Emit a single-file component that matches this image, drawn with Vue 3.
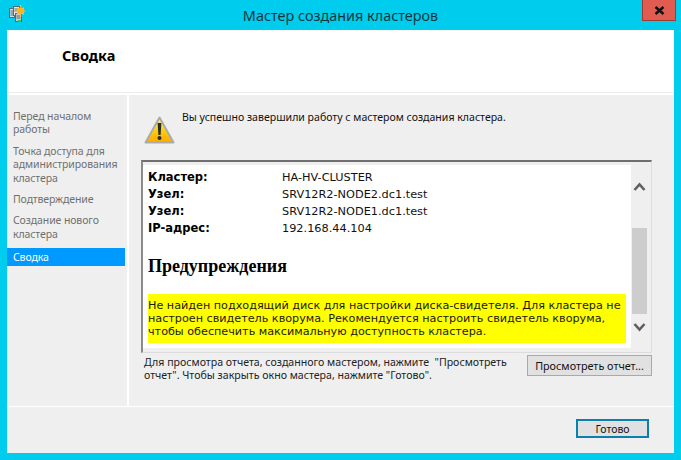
<script setup>
const steps = [
  { label: 'Перед началом работы' },
  { label: 'Точка доступа для администрирования кластера' },
  { label: 'Подтверждение' },
  { label: 'Создание нового кластера' },
  { label: 'Сводка', active: true }
]
const facts = [
  ['Кластер:', 'HA-HV-CLUSTER'],
  ['Узел:', 'SRV12R2-NODE2.dc1.test'],
  ['Узел:', 'SRV12R2-NODE1.dc1.test'],
  ['IP-адрес:', '192.168.44.104']
]
</script>

<template>
  <div class="window">
    <div class="titlebar">
      <svg class="app-icon" width="18" height="18" viewBox="0 0 18 18">
        <g stroke="#5a6a70" stroke-width="1">
          <rect x="1.5" y="3.5" width="5" height="9" fill="#d8dfe2" />
          <rect x="5.5" y="1.5" width="6" height="9" fill="#e6eaec" />
          <rect x="7.5" y="8.5" width="6" height="8" fill="#c8d0d4" />
        </g>
        <path d="M2.5 6h3M2.5 8h3M2.5 10h3M6.5 4h4M6.5 6h4M8.5 11h4M8.5 13h4" stroke="#56666c" stroke-width="1" />
        <rect x="10" y="15" width="3" height="2" fill="#35c24a" />
        <circle cx="12.6" cy="6" r="3.6" fill="#ffb21c" />
        <path d="M12.6 0v2M12.6 10v2M7.6 6h2M15.6 6h2M9.2 2.6l1.4 1.4M14.6 8l1.4 1.4M16 2.6l-1.4 1.4M10.6 8 9.2 9.4" stroke="#ffc53d" stroke-width="1.2" />
      </svg>
      <span class="title">Мастер создания кластеров</span>
      <button class="close" type="button">
        <svg width="11" height="9" viewBox="0 0 11 9"><path d="M1.5 1l8 7M9.5 1l-8 7" stroke="#111" stroke-width="2.4" /></svg>
      </button>
    </div>

    <div class="client">
      <header class="head"><h1>Сводка</h1></header>

      <div class="middle">
        <nav class="steps">
          <div v-for="s in steps" :key="s.label" class="step" :class="{ active: s.active }">{{ s.label }}</div>
        </nav>

        <main class="main">
          <div class="intro">
            <svg class="warn" width="31" height="28" viewBox="0 0 31 28">
              <defs>
                <linearGradient id="warnfill" x1="0" y1="0" x2="0" y2="1">
                  <stop offset="0" stop-color="#fff0a8" />
                  <stop offset="0.5" stop-color="#ffcf10" />
                  <stop offset="1" stop-color="#ffa800" />
                </linearGradient>
              </defs>
              <path d="M15.5 1.5 29.5 26.5H1.5Z" fill="url(#warnfill)" stroke="#ababab" stroke-width="2" stroke-linejoin="round" />
              <path d="M13.6 7h3.8l-.8 12h-2.2Z" fill="#2b2b2b" />
              <circle cx="15.5" cy="22" r="2" fill="#2b2b2b" />
            </svg>
            <p>Вы успешно завершили работу с мастером создания кластера.</p>
          </div>

          <section class="report">
            <div class="doc">
              <div v-for="(f, i) in facts" :key="i" class="fact">
                <b>{{ f[0] }}</b><span>{{ f[1] }}</span>
              </div>
              <h2>Предупреждения</h2>
              <p class="alert">Не найден подходящий диск для настройки диска-свидетеля. Для кластера не настроен свидетель кворума. Рекомендуется настроить свидетель кворума, чтобы обеспечить максимальную доступность кластера.</p>
            </div>
            <div class="scroll">
              <svg width="13" height="10" viewBox="0 0 13 10"><path d="M1.5 8 6.5 2.5 11.5 8" fill="none" stroke="#5f5f5f" stroke-width="2.6" /></svg>
              <div class="thumb"></div>
              <svg width="13" height="10" viewBox="0 0 13 10"><path d="M1.5 2 6.5 7.5 11.5 2" fill="none" stroke="#5f5f5f" stroke-width="2.6" /></svg>
            </div>
          </section>

          <div class="note">
            <p>Для просмотра отчета, созданного мастером, нажмите &nbsp;"Просмотреть отчет". Чтобы закрыть окно мастера, нажмите "Готово".</p>
            <button class="btn view" type="button">Просмотреть отчет...</button>
          </div>
        </main>
      </div>

      <footer class="foot">
        <button class="btn done" type="button">Готово</button>
      </footer>
    </div>
  </div>
</template>

<style scoped>
.window {
  position: relative;
  width: 681px;
  height: 460px;
  box-sizing: border-box;
  padding: 0 7px 7px;
  background: #00ccee;
  display: flex;
  flex-direction: column;
  font-family: "Noto Sans", "Open Sans", sans-serif;
  color: #111;
  overflow: hidden;
}
.titlebar {
  height: 30px;
  flex: none;
  display: flex;
  align-items: center;
  justify-content: center;
}
.app-icon {
  position: absolute;
  left: 8px;
  top: 5px;
}
.title {
  font-size: 14.4px;
  color: #14363d;
}
.close {
  position: absolute;
  left: 642px;
  top: 0;
  width: 34px;
  height: 21px;
  box-sizing: border-box;
  padding: 0;
  border: 1px solid #9c3b33;
  border-top: 0;
  background: #e05b50;
  display: flex;
  align-items: center;
  justify-content: center;
}
.client {
  flex: 1;
  display: flex;
  flex-direction: column;
  background: #efefef;
  min-height: 0;
}
.head {
  height: 63px;
  flex: none;
  box-sizing: border-box;
  background: #fff;
  padding: 15px 0 0 55px;
  border-bottom: 1px solid #ececec;
  margin-bottom: 2px;
  box-shadow: 0 1px 0 #fff, 0 2px 0 #fff;
}
.head h1 {
  margin: 0;
  font-size: 14.5px;
  line-height: 20px;
  font-weight: 700;
  color: #000;
}
.middle {
  flex: 1;
  display: flex;
  min-height: 0;
}
.steps {
  width: 120px;
  flex: none;
  border-right: 2px solid #fff;
  padding-top: 15px;
  display: flex;
  flex-direction: column;
  gap: 7.9px;
}
.step {
  margin-right: 2px;
  padding: 0 4px 0 6px;
  font-size: 10.5px;
  letter-spacing: -0.1px;
  line-height: 13.4px;
  color: #6f6f6f;
}
.step.active {
  background: #0099ff;
  color: #fff;
  margin-top: -1px;
  padding-top: 3.4px;
  padding-bottom: 1.6px;
}
.main {
  flex: 1;
  display: flex;
  flex-direction: column;
  padding: 0 22px 0 12px;
  min-width: 0;
}
.intro {
  height: 65px;
  flex: none;
  box-sizing: border-box;
  display: flex;
  padding: 15px 0 0 3px;
  gap: 7px;
}
.intro p {
  margin: 0;
  font-size: 10.55px;
  line-height: 14px;
  color: #111;
}
.warn {
  margin-top: 6px;
}
.report {
  height: 193px;
  flex: none;
  box-sizing: border-box;
  border-top: 2px solid #6f6f6f;
  border-left: 2px solid #8a8a8a;
  border-right: 1px solid #dcdcdc;
  border-bottom: 1px solid #dcdcdc;
  padding-top: 3px;
  padding-bottom: 4px;
  display: flex;
}
.doc {
  width: 488px;
  flex: none;
  box-sizing: border-box;
  background: #fff;
  padding: 4px 5px 0 5px;
  font-family: "DejaVu Sans", sans-serif;
  font-size: 11.2px;
  color: #111;
}
.fact {
  display: flex;
  height: 17px;
  line-height: 17px;
}
.fact b {
  width: 134px;
  flex: none;
  color: #000;
  font-size: 11.5px;
}
.fact span {
  font-size: 11.3px;
}
h2 {
  margin: 19px 0 0;
  height: 38px;
  font-family: "Liberation Serif", serif;
  font-size: 18px;
  line-height: 20px;
  font-weight: 700;
  color: #000;
}
.alert {
  margin: 0;
  background: #ffff00;
  padding: 5px 0 4px;
  line-height: 13px;
  height: 49px;
  box-sizing: border-box;
  color: #1a1a00;
}
.scroll {
  width: 15px;
  flex: none;
  margin-left: 1px;
  display: flex;
  flex-direction: column;
  align-items: center;
  padding-top: 17px;
}
.thumb {
  width: 15px;
  height: 86px;
  margin: 36px 0 8px;
  background: #cdcdcd;
}
.note {
  display: flex;
  justify-content: space-between;
  padding: 1px 0 0 3px;
}
.note p {
  margin: 2px 0 0;
  width: 372px;
  font-size: 10.6px;
  line-height: 13px;
  color: #222;
}
.btn {
  box-sizing: border-box;
  background: #e1e1e1;
  font-family: inherit;
  font-size: 10.8px;
  color: #111;
  padding: 0;
}
.view {
  width: 125px;
  height: 21px;
  margin-top: 1px;
  border: 1px solid #a9a9a9;
}
.foot {
  height: 47px;
  flex: none;
  box-sizing: border-box;
  border-top: 1px solid #fff;
  display: flex;
  justify-content: flex-end;
  padding: 12px 25px 0 0;
}
.done {
  width: 73px;
  height: 19px;
  border: 2px solid #0a7fb0;
  font-size: 10.5px;
}
</style>
